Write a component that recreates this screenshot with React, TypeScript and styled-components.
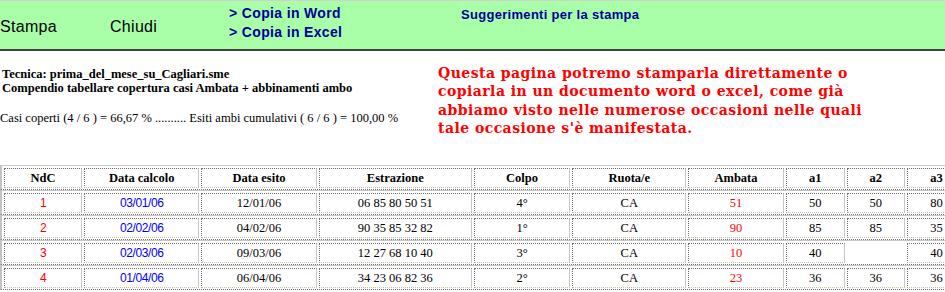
import React from 'react';
import styled, { createGlobalStyle } from 'styled-components';

const Global = createGlobalStyle`
  html, body { margin: 0; padding: 0; background: #ffffff; overflow: hidden; }
  body { font-family: "Liberation Serif", "Times New Roman", serif; color: #000; }
`;

const Page = styled.div`
  width: 945px;
  height: 292px;
  overflow: hidden;
`;

const Bar = styled.div`
  height: 48px;
  background: #a8ffa8;
  border-top: 1px solid #d0d0d0;
  border-bottom: 2px solid #404040;
  display: flex;
  align-items: flex-start;
  font-family: "Liberation Sans", Arial, sans-serif;
`;

const BarButton = styled.div<{ $w: number }>`
  width: ${p => p.$w}px;
  padding-top: 16px;
  font-size: 16px;
  line-height: 20px;
  letter-spacing: 0.3px;
  color: #000;
`;

const Links = styled.div`
  width: 232px;
  padding-top: 3px;
  display: flex;
  flex-direction: column;
`;

const LinkItem = styled.div`
  font-size: 14px;
  font-weight: bold;
  line-height: 19px;
  letter-spacing: 0.35px;
  color: #000099;
`;

const Hint = styled.div`
  padding-top: 4px;
  font-size: 13px;
  font-weight: bold;
  line-height: 19px;
  letter-spacing: 0.3px;
  color: #000099;
`;

const Info = styled.div`
  display: flex;
  padding-top: 13px;
  height: 101px;
`;

const InfoLeft = styled.div`
  width: 436px;
  padding-left: 2px;
  padding-top: 3px;
`;

const BoldLine = styled.div`
  font-size: 12.5px;
  font-weight: bold;
  line-height: 14px;
`;

const Summary = styled.div`
  margin-top: 16px;
  font-size: 12.5px;
  line-height: 15px;
  margin-left: -2px;
`;

const Note = styled.div`
  font-family: "DejaVu Serif", Georgia, serif;
  font-size: 14px;
  font-weight: bold;
  line-height: 18.3px;
  letter-spacing: 0.45px;
  color: #ff0000;
  white-space: nowrap;
`;

const Rows = styled.div`
  display: flex;
  flex-direction: column;
`;

const RowTable = styled.table`
  border-collapse: separate;
  border-spacing: 2px 0;
  padding: 2px 0 1px 0;
  table-layout: fixed;
  width: 968px;
  border-left: 2px solid #c4c4c4;
  border-top: 1px solid #c8c8c8;
  border-bottom: 1px dotted #707070;
`;

type Tone = 'black' | 'red' | 'blue';

const Cell = styled.td<{ $w: number; $tone?: Tone; $sans?: boolean; $head?: boolean; $empty?: boolean }>`
  box-sizing: border-box;
  width: ${p => p.$w}px;
  height: 20px;
  padding: 0;
  text-align: center;
  vertical-align: middle;
  font-family: ${p => (p.$sans ? '"Liberation Sans", Arial, sans-serif' : '"Liberation Serif", "Times New Roman", serif')};
  font-size: ${p => (p.$sans ? '12px' : '12.5px')};
  letter-spacing: ${p => (p.$sans ? '-0.4px' : '0')};
  font-weight: ${p => (p.$head ? 'bold' : 'normal')};
  line-height: 16px;
  color: ${p => (p.$tone === 'red' ? '#ff0000' : p.$tone === 'blue' ? '#0000ff' : '#000000')};
  border-top: 1px dotted ${p => (p.$empty ? 'transparent' : '#6e6e6e')};
  border-left: 1px dotted ${p => (p.$empty ? 'transparent' : '#6e6e6e')};
  border-right: 1px solid ${p => (p.$empty ? 'transparent' : '#c8c8c8')};
  border-bottom: 1px dotted ${p => (p.$empty ? 'transparent' : '#c8c4a8')};
  white-space: nowrap;
  overflow: hidden;
`;

const widths = [78, 115, 115, 153, 96, 114, 95, 59, 58, 59];
const headers = ['NdC', 'Data calcolo', 'Data esito', 'Estrazione', 'Colpo', 'Ruota/e', 'Ambata', 'a1', 'a2', 'a3'];

const data: string[][] = [
  ['1', '03/01/06', '12/01/06', '06 85 80 50 51', '4°', 'CA', '51', '50', '50', '80'],
  ['2', '02/02/06', '04/02/06', '90 35 85 32 82', '1°', 'CA', '90', '85', '85', '35'],
  ['3', '02/03/06', '09/03/06', '12 27 68 10 40', '3°', 'CA', '10', '40', '', '40'],
  ['4', '01/04/06', '06/04/06', '34 23 06 82 36', '2°', 'CA', '23', '36', '36', '36'],
];

const tone = (i: number): Tone => (i === 0 || i === 6 ? 'red' : i === 1 ? 'blue' : 'black');

export default function App() {
  return (
    <Page>
      <Global />
      <Bar>
        <BarButton $w={110}>Stampa</BarButton>
        <BarButton $w={119}>Chiudi</BarButton>
        <Links>
          <LinkItem>&gt; Copia in Word</LinkItem>
          <LinkItem>&gt; Copia in Excel</LinkItem>
        </Links>
        <Hint>Suggerimenti per la stampa</Hint>
      </Bar>
      <Info>
        <InfoLeft>
          <BoldLine>Tecnica: prima_del_mese_su_Cagliari.sme</BoldLine>
          <BoldLine>Compendio tabellare copertura casi Ambata + abbinamenti ambo</BoldLine>
          <Summary>Casi coperti (4 / 6 ) = 66,67 % .......... Esiti ambi cumulativi ( 6 / 6 ) = 100,00 %</Summary>
        </InfoLeft>
        <Note>
          Questa pagina potremo stamparla direttamente o<br />
          copiarla in un documento word o excel, come già<br />
          abbiamo visto nelle numerose occasioni nelle quali<br />
          tale occasione s'è manifestata.
        </Note>
      </Info>
      <Rows>
        <RowTable>
          <tbody>
            <tr>
              {headers.map((h, i) => (
                <Cell key={h} $w={widths[i]} $head>{h}</Cell>
              ))}
            </tr>
          </tbody>
        </RowTable>
        {data.map((row, r) => (
          <RowTable key={r}>
            <tbody>
              <tr>
                {row.map((v, i) => (
                  <Cell key={i} $w={widths[i]} $tone={tone(i)} $sans={i < 2} $empty={v === ''}>
                    {v}
                  </Cell>
                ))}
              </tr>
            </tbody>
          </RowTable>
        ))}
      </Rows>
    </Page>
  );
}
